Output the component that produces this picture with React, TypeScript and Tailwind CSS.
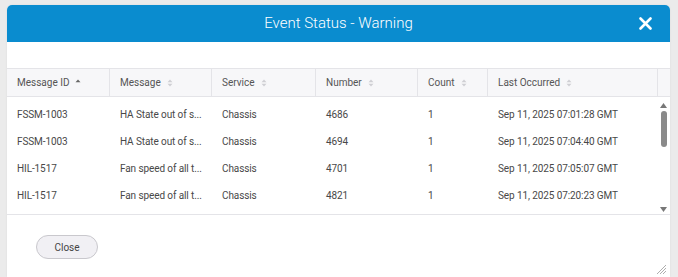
type Row = {
  id: string
  message: string
  service: string
  number: string
  count: string
  last: string
}

const rows: Row[] = [
  {id: "FSSM-1003", message: "HA State out of s...", service: "Chassis", number: "4686", count: "1", last: "Sep 11, 2025 07:01:28 GMT"},
  {id: "FSSM-1003", message: "HA State out of s...", service: "Chassis", number: "4694", count: "1", last: "Sep 11, 2025 07:04:40 GMT"},
  {id: "HIL-1517", message: "Fan speed of all t...", service: "Chassis", number: "4701", count: "1", last: "Sep 11, 2025 07:05:07 GMT"},
  {id: "HIL-1517", message: "Fan speed of all t...", service: "Chassis", number: "4821", count: "1", last: "Sep 11, 2025 07:20:23 GMT"},
]

const columns = [
  {label: "Message ID", width: "w-[103px]", active: true},
  {label: "Message", width: "w-[102px]"},
  {label: "Service", width: "w-[104px]"},
  {label: "Number", width: "w-[102px]"},
  {label: "Count", width: "w-[70px]"},
  {label: "Last Occurred", width: "w-[170px]"},
]

const SortIcon = ({active}: {active?: boolean}) => (
  <svg width="6" height="8" viewBox="0 0 6 8" className="ml-[6px]">
    <path d="M3 0.5 L5.5 3.2 H0.5 Z" fill={active ? "#666" : "#cfcfd4"} />
    {!active && <path d="M3 7.5 L5.5 4.8 H0.5 Z" fill="#cfcfd4" />}
  </svg>
)

export default function App() {
  return (
    <div className="flex h-[277px] w-[678px] bg-[#ebebeb] pl-[7px] pt-[5px] font-['Roboto',sans-serif]">
      <div className="flex h-[272px] w-[663px] flex-col rounded-t-[5px] bg-white shadow-[0_0_2px_rgba(0,0,0,0.08)]">
        <div className="relative flex h-[37px] items-center justify-center rounded-t-[5px] bg-[#0a8ccf]">
          <span className="text-[15px] font-light tracking-[0px] text-white">Event Status - Warning</span>
          <svg width="13" height="13" viewBox="0 0 13 13" className="absolute left-[632px] top-[12px]">
            <path d="M1.5 1.5 L11.5 11.5 M11.5 1.5 L1.5 11.5" stroke="white" strokeWidth="2.6" strokeLinecap="round" />
          </svg>
        </div>

        <div className="h-[26px]" />

        <div className="flex h-[29px] border-y border-[#e4e4e8] bg-[#f7f7f9] text-[10px] text-[#555]">
          {columns.map((c) => (
            <div key={c.label} className={`${c.width} flex items-center whitespace-nowrap border-r border-[#e4e4e8] pl-[10px]`}>
              {c.label}
              <SortIcon active={c.active} />
            </div>
          ))}
          <div className="flex-1" />
        </div>

        <div className="relative flex h-[118px] border-b border-[#e4e4e8] pt-[4px]">
          <div className="flex flex-col">
            {rows.map((r, i) => (
              <div key={i} className="flex h-[27px] items-center whitespace-nowrap text-[10px] tracking-[-0.1px] text-[#484848]">
                <div className="w-[103px] pl-[10px]">{r.id}</div>
                <div className="w-[102px] pl-[10px]">{r.message}</div>
                <div className="w-[104px] pl-[10px]">{r.service}</div>
                <div className="w-[102px] pl-[10px]">{r.number}</div>
                <div className="w-[70px] pl-[10px]">{r.count}</div>
                <div className="w-[170px] pl-[10px]">{r.last}</div>
              </div>
            ))}
          </div>
          <div className="ml-auto mr-[2px] flex w-[9px] flex-col items-center py-[2px]">
            <svg width="7" height="5" viewBox="0 0 7 5">
              <path d="M3.5 0 L7 5 H0 Z" fill="#777" />
            </svg>
            <div className="mt-[3px] h-[36px] w-[6px] rounded-full bg-[#8a8a8a]" />
            <div className="flex-1" />
            <svg width="7" height="5" viewBox="0 0 7 5">
              <path d="M3.5 5 L7 0 H0 Z" fill="#777" />
            </svg>
          </div>
        </div>

        <div className="relative flex flex-1 items-start pl-[29px] pt-[20px]">
          <button className="h-[24px] w-[62px] rounded-full border border-[#c9c8cd] bg-[#f1f0f4] text-[10px] text-[#444]">
            Close
          </button>
          <svg width="11" height="11" viewBox="0 0 11 11" className="absolute bottom-[2px] right-[3px]">
            <path d="M10 1 L1 10 M10 4 L4 10 M10 7 L7 10" stroke="#999" strokeWidth="0.8" />
          </svg>
        </div>
      </div>
    </div>
  )
}
